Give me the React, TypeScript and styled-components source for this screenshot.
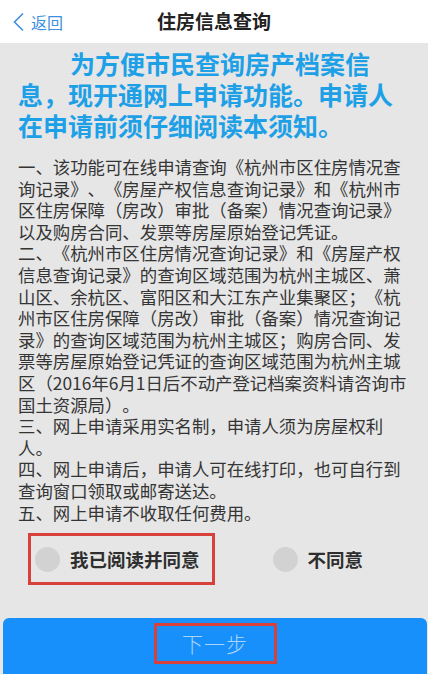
import React, { FC, useState } from 'react';
import styled, { createGlobalStyle } from 'styled-components';

const GlobalStyle = createGlobalStyle`
  html, body {
    margin: 0;
    padding: 0;
    background: #e6e6e6;
  }
  * {
    box-sizing: border-box;
  }
`;

const colors = {
  page: '#e6e6e6',
  link: '#3d8fe0',
  heading: '#1ea0e6',
  text: '#353535',
  button: '#1890fb',
  mark: '#d8403c',
  radio: '#d2d2d2',
};

const Page = styled.div`
  display: flex;
  flex-direction: column;
  height: 674px;
  background: ${colors.page};
  font-family: 'Noto Sans CJK SC', 'Noto Sans', sans-serif;
  text-spacing-trim: space-all;
`;

const Header = styled.header`
  position: relative;
  display: flex;
  align-items: center;
  justify-content: center;
  height: 43px;
  background: #fff;
  flex-shrink: 0;
`;

const BackLink = styled.a`
  position: absolute;
  left: 12px;
  top: 0;
  bottom: 0;
  display: flex;
  align-items: center;
  gap: 6px;
  font-size: 16px;
  color: ${colors.link};
  text-decoration: none;
`;

const Title = styled.h1`
  margin: 0 0 2px;
  font-size: 19px;
  font-weight: 700;
  color: #222;
`;

const Content = styled.main`
  padding: 5px 18px 0;
`;

const Notice = styled.p`
  margin: 0;
  width: 376px;
  text-indent: 52px;
  font-size: 25px;
  line-height: 31px;
  font-weight: 700;
  color: ${colors.heading};
`;

const Rules = styled.div`
  margin-top: 15px;
  font-size: 17.4px;
  line-height: 21.6px;
  color: ${colors.text};
`;

const Rule = styled.p`
  margin: 0;
`;

const Options = styled.div`
  display: flex;
  align-items: center;
  gap: 51px;
  margin: 10px 0 0 10px;
`;

const Option = styled.label<{ $marked?: boolean }>`
  display: flex;
  align-items: center;
  gap: 10px;
  height: 52px;
  padding: 0 12px 0 4px;
  border: 3px solid ${(p) => (p.$marked ? colors.mark : 'transparent')};
  font-size: 18.5px;
  font-weight: 700;
  color: #2e2e2e;
  cursor: pointer;
`;

const Radio = styled.span<{ $checked: boolean }>`
  width: 25px;
  height: 25px;
  border-radius: 50%;
  background: ${(p) => (p.$checked ? colors.button : colors.radio)};
  flex-shrink: 0;
`;

const Footer = styled.div`
  margin-top: auto;
  padding: 0 1px 0 3px;
`;

const NextButton = styled.button`
  display: flex;
  align-items: center;
  justify-content: center;
  width: 100%;
  height: 56px;
  border: none;
  border-radius: 6px 6px 0 0;
  background: ${colors.button};
  font-family: inherit;
  cursor: pointer;
`;

const NextLabel = styled.span`
  display: flex;
  align-items: center;
  justify-content: center;
  width: 123px;
  height: 41px;
  margin-top: -6px;
  border: 3px solid ${colors.mark};
  font-size: 21px;
  font-weight: 300;
  color: #a9d5fc;
  letter-spacing: 1px;
`;

const rules = [
  '一、该功能可在线申请查询《杭州市区住房情况查询记录》、《房屋产权信息查询记录》和《杭州市区住房保障（房改）审批（备案）情况查询记录》以及购房合同、发票等房屋原始登记凭证。',
  '二、《杭州市区住房情况查询记录》和《房屋产权信息查询记录》的查询区域范围为杭州主城区、萧山区、余杭区、富阳区和大江东产业集聚区；《杭州市区住房保障（房改）审批（备案）情况查询记录》的查询区域范围为杭州主城区；购房合同、发票等房屋原始登记凭证的查询区域范围为杭州主城区（2016年6月1日后不动产登记档案资料请咨询市国土资源局）。',
  '三、网上申请采用实名制，申请人须为房屋权利人。',
  '四、网上申请后，申请人可在线打印，也可自行到查询窗口领取或邮寄送达。',
  '五、网上申请不收取任何费用。',
];

const App: FC = () => {
  const [agree, setAgree] = useState<boolean | null>(null);

  return (
    <Page>
      <GlobalStyle />
      <Header>
        <BackLink href="#">
          <svg width="13" height="20" viewBox="0 0 13 20" fill="none">
            <path d="M11 1.5L2.5 10L11 18.5" stroke={colors.link} strokeWidth="1.6" />
          </svg>
          返回
        </BackLink>
        <Title>住房信息查询</Title>
      </Header>
      <Content>
        <Notice>为方便市民查询房产档案信息，现开通网上申请功能。申请人在申请前须仔细阅读本须知。</Notice>
        <Rules>
          {rules.map((r) => (
            <Rule key={r}>{r}</Rule>
          ))}
        </Rules>
        <Options>
          <Option $marked onClick={() => setAgree(true)}>
            <Radio $checked={agree === true} />
            我已阅读并同意
          </Option>
          <Option onClick={() => setAgree(false)}>
            <Radio $checked={agree === false} />
            不同意
          </Option>
        </Options>
      </Content>
      <Footer>
        <NextButton type="button">
          <NextLabel>下一步</NextLabel>
        </NextButton>
      </Footer>
    </Page>
  );
};

export default App;
